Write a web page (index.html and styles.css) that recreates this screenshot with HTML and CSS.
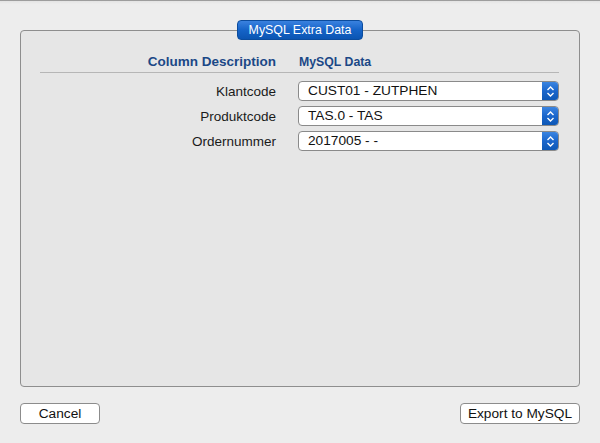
FILE: index.html
```html
<!DOCTYPE html>
<html>
<head>
<meta charset="utf-8">
<link rel="stylesheet" href="styles.css">
</head>
<body>
<div class="window">
  <div class="group">
    <div class="group-title">MySQL Extra Data</div>
    <div class="grid header">
      <div class="label head">Column Description</div>
      <div class="head data-head">MySQL Data</div>
    </div>
    <div class="divider"></div>
    <div class="grid rows">
      <div class="label">Klantcode</div>
      <div class="select"><span class="value">CUST01 - ZUTPHEN</span><span class="stepper"><svg width="9" height="13" viewBox="0 0 9 13"><path d="M1.5 5 L4.5 2 L7.5 5 M1.5 8 L4.5 11 L7.5 8" fill="none" stroke="#fff" stroke-width="1.4"/></svg></span></div>
      <div class="label">Produktcode</div>
      <div class="select"><span class="value">TAS.0 - TAS</span><span class="stepper"><svg width="9" height="13" viewBox="0 0 9 13"><path d="M1.5 5 L4.5 2 L7.5 5 M1.5 8 L4.5 11 L7.5 8" fill="none" stroke="#fff" stroke-width="1.4"/></svg></span></div>
      <div class="label">Ordernummer</div>
      <div class="select"><span class="value">2017005 - -</span><span class="stepper"><svg width="9" height="13" viewBox="0 0 9 13"><path d="M1.5 5 L4.5 2 L7.5 5 M1.5 8 L4.5 11 L7.5 8" fill="none" stroke="#fff" stroke-width="1.4"/></svg></span></div>
    </div>
  </div>
  <div class="footer">
    <button class="btn btn-cancel">Cancel</button>
    <button class="btn btn-export">Export to MySQL</button>
  </div>
</div>
</body>
</html>
```
FILE: styles.css
```css
html, body {
  margin: 0;
  padding: 0;
}
body {
  width: 600px;
  height: 443px;
  background: #ececec;
  font-family: "Liberation Sans", Arial, sans-serif;
  color: #1a1a1a;
  overflow: hidden;
}
.window {
  box-sizing: border-box;
  height: 443px;
  border-top: 1px solid #9d9d9d;
  padding: 29px 20px 0 20px;
  background: linear-gradient(#e3e3e3, #ededed 3px, #ededed);
}
.group {
  position: relative;
  box-sizing: border-box;
  height: 357px;
  border: 1px solid #8e8e8e;
  border-radius: 4px;
  background: #e6e6e6;
  padding: 0 20px 0 19px;
}
.group-title {
  position: absolute;
  top: -11px;
  left: 50%;
  transform: translateX(-50%);
  width: 126px;
  height: 20px;
  box-sizing: border-box;
  border-radius: 4px;
  background: linear-gradient(#3a82df, #1563c8 50%, #0b55b2);
  border: 1px solid #0b4c9e;
  color: #fff;
  font-size: 12.4px;
  line-height: 18px;
  text-align: center;
}
.grid {
  display: grid;
  grid-template-columns: 1fr 261px;
  column-gap: 22px;
  align-items: center;
}
.header {
  padding-top: 22px;
  height: 18px;
}
.head {
  font-weight: bold;
  font-size: 12.3px;
  color: #1b4886;
  line-height: 18px;
}
.data-head {
  padding-left: 1px;
}
.label {
  text-align: right;
  font-size: 13.5px;
}
.divider {
  height: 1px;
  background: #b6b6b6;
  margin: 1px 0 0 0;
}
.rows {
  margin-top: 8px;
  row-gap: 5px;
}
.select {
  box-sizing: border-box;
  height: 20px;
  display: flex;
  align-items: stretch;
  background: #fff;
  border: 1px solid #8a8a8a;
  border-radius: 4px;
  overflow: hidden;
}
.value {
  flex: 1;
  font-size: 13.7px;
  line-height: 18px;
  padding-left: 9px;
  color: #111;
}
.stepper {
  width: 17px;
  display: flex;
  align-items: center;
  justify-content: center;
  background: linear-gradient(#3f88e3, #1a66cc 50%, #0c56b3);
  margin: -1px -1px -1px 0;
  border-radius: 0 4px 4px 0;
}
.footer {
  display: flex;
  justify-content: space-between;
  margin-top: 16px;
}
.btn {
  box-sizing: border-box;
  height: 21px;
  background: #fff;
  border: 1px solid #8c8c8c;
  border-radius: 4px;
  font-family: "Liberation Sans", Arial, sans-serif;
  font-size: 13.7px;
  color: #111;
  padding: 0;
  line-height: 19px;
}
.btn-cancel {
  width: 80px;
}
.btn-export {
  width: 120px;
}
```
